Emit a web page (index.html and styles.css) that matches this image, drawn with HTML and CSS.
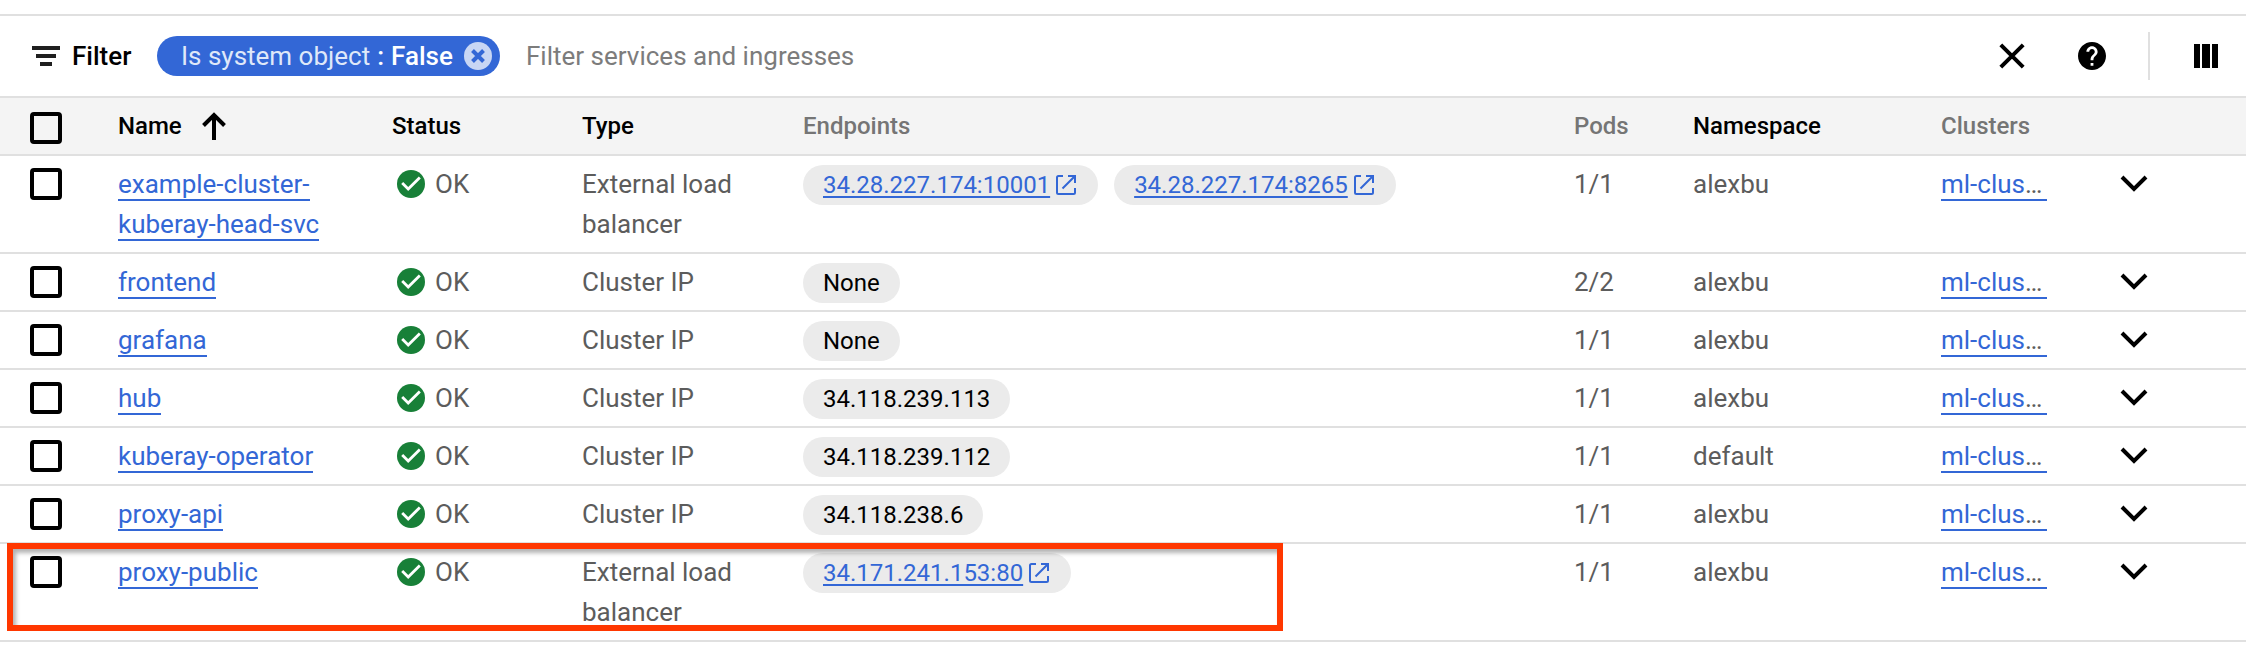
FILE: index.html
```
<!DOCTYPE html>
<html lang="en">
<head>
<meta charset="utf-8">
<title>Services and ingresses</title>
<link rel="stylesheet" href="styles.css">
</head>
<body>
<svg class="defs" width="0" height="0">
  <symbol id="ok" viewBox="2 2 20 20"><circle cx="12" cy="12" r="10" fill="#188038"/><path d="M10 17l-5-5 1.410-1.410L10 14.170l7.590-7.590L19 8z" fill="#fff"/></symbol>
  <symbol id="open" viewBox="0 0 20 20"><path d="M7 1H2.500Q1 1 1 2.500V17.500Q1 19 2.500 19H17.500Q19 19 19 17.500V13M12 1h7v7M19 1L6.500 13.500" fill="none" stroke="#3367d6" stroke-width="2"/></symbol>
  <symbol id="chev" viewBox="0 0 28 18"><path d="M2 2l12 12 12-12" fill="none" stroke="#000" stroke-width="4"/></symbol>
</svg>
<div class="toolbar">
  <svg class="filter-icon" viewBox="0 0 28 20"><path d="M0 0h28v4H0zM4 8h20v4H4zM8 16h12v4H8z" fill="#1f1f1f"/></svg>
  <span class="filter-label">Filter</span>
  <div class="filter-chip"><span class="key">Is system object</span><span class="colon">:</span><b>False</b>
    <svg class="chip-x" viewBox="0 0 28 28"><circle cx="14" cy="14" r="14" fill="#c8d6f4"/><path d="M8.500 8.500l11 11M19.500 8.500l-11 11" stroke="#3367d6" stroke-width="4"/></svg>
  </div>
  <span class="placeholder">Filter services and ingresses</span>
  <svg class="clear" viewBox="0 0 26 26"><path d="M1.800 1.800l22.400 22.400M24.200 1.800l-22.400 22.400" stroke="#000" stroke-width="4"/></svg>
  <svg class="help" viewBox="2 2 20 20"><path d="M12 2C6.480 2 2 6.480 2 12s4.480 10 10 10 10-4.480 10-10S17.520 2 12 2zm1 17h-2v-2h2v2zm2.070-7.750l-.9.920C13.450 12.900 13 13.500 13 15h-2v-.5c0-1.100.45-2.100 1.170-2.830l1.240-1.260c.37-.36.59-.86.59-1.410 0-1.100-.9-2-2-2s-2 .9-2 2H8c0-2.210 1.790-4 4-4s4 1.790 4 4c0 .88-.36 1.680-.93 2.250z"/></svg>
  <i class="divider"></i>
  <svg class="columns" viewBox="0 0 24 24"><path d="M0 0h6v24H0zM8 0h8v24H8zM18 0h6v24h-6z"/></svg>
</div>
<div class="row head">
  <i class="box"></i>
  <div>Name<svg class="sort" viewBox="0 0 24 28"><path d="M12 28V3M1.500 13.500L12 3l10.500 10.500" fill="none" stroke="#000" stroke-width="4"/></svg></div>
  <div>Status</div><div>Type</div><div class="muted">Endpoints</div><div class="muted">Pods</div><div>Namespace</div><div class="muted">Clusters</div><div></div>
</div>
<div class="row tall">
  <i class="box"></i><div><a class="link">example-cluster-<br>kuberay-head-svc</a></div>
  <div class="status"><svg><use href="#ok"/></svg>OK</div><div>External load<br>balancer</div>
  <div class="chips"><span class="chip linked"><a>34.28.227.174:10001</a><svg><use href="#open"/></svg></span><span class="chip linked"><a>34.28.227.174:8265</a><svg><use href="#open"/></svg></span></div>
  <div>1/1</div><div>alexbu</div><div class="cluster"><a>ml-clus</a>…</div><svg class="chev"><use href="#chev"/></svg>
</div>
<div class="row">
  <i class="box"></i><div><a class="link">frontend</a></div>
  <div class="status"><svg><use href="#ok"/></svg>OK</div><div>Cluster IP</div>
  <div class="chips"><span class="chip">None</span></div>
  <div>2/2</div><div>alexbu</div><div class="cluster"><a>ml-clus</a>…</div><svg class="chev"><use href="#chev"/></svg>
</div>
<div class="row">
  <i class="box"></i><div><a class="link">grafana</a></div>
  <div class="status"><svg><use href="#ok"/></svg>OK</div><div>Cluster IP</div>
  <div class="chips"><span class="chip">None</span></div>
  <div>1/1</div><div>alexbu</div><div class="cluster"><a>ml-clus</a>…</div><svg class="chev"><use href="#chev"/></svg>
</div>
<div class="row">
  <i class="box"></i><div><a class="link">hub</a></div>
  <div class="status"><svg><use href="#ok"/></svg>OK</div><div>Cluster IP</div>
  <div class="chips"><span class="chip">34.118.239.113</span></div>
  <div>1/1</div><div>alexbu</div><div class="cluster"><a>ml-clus</a>…</div><svg class="chev"><use href="#chev"/></svg>
</div>
<div class="row">
  <i class="box"></i><div><a class="link">kuberay-operator</a></div>
  <div class="status"><svg><use href="#ok"/></svg>OK</div><div>Cluster IP</div>
  <div class="chips"><span class="chip">34.118.239.112</span></div>
  <div>1/1</div><div>default</div><div class="cluster"><a>ml-clus</a>…</div><svg class="chev"><use href="#chev"/></svg>
</div>
<div class="row">
  <i class="box"></i><div><a class="link">proxy-api</a></div>
  <div class="status"><svg><use href="#ok"/></svg>OK</div><div>Cluster IP</div>
  <div class="chips"><span class="chip">34.118.238.6</span></div>
  <div>1/1</div><div>alexbu</div><div class="cluster"><a>ml-clus</a>…</div><svg class="chev"><use href="#chev"/></svg>
</div>
<div class="row tall">
  <i class="box"></i><div><a class="link">proxy-public</a></div>
  <div class="status"><svg><use href="#ok"/></svg>OK</div><div>External load<br>balancer</div>
  <div class="chips"><span class="chip linked"><a>34.171.241.153:80</a><svg><use href="#open"/></svg></span></div>
  <div>1/1</div><div>alexbu</div><div class="cluster"><a>ml-clus</a>…</div><svg class="chev"><use href="#chev"/></svg>
  <div class="highlight"></div>
</div>
</body>
</html>
```
FILE: styles.css
```
* { box-sizing: border-box; }
body { margin: 0; padding-top: 14px; background: #fff; color: #5c5c5c; font: 26px/40px Roboto, sans-serif; height: 666px; overflow: hidden; }
svg { display: block; flex: none; }
.defs { position: absolute; }
.toolbar { height: 84px; border-top: 2px solid #e0e0e0; border-bottom: 2px solid #e0e0e0; display: flex; align-items: center; padding: 0 28px 0 32px; }
.filter-icon { width: 28px; height: 20px; }
.filter-label { margin-left: 12px; width: 85px; font-weight: 500; color: #000; }
.filter-chip { width: 343px; height: 40px; border-radius: 20px; background: #3367d6; color: #fff; display: flex; align-items: center; padding: 0 8px 0 24px; white-space: nowrap; }
.key { color: #dfe8f9; }
.colon { margin: 0 7px; font-weight: 500; }
.filter-chip b { font-weight: 500; }
.chip-x { width: 28px; height: 28px; margin-left: auto; }
.placeholder { margin-left: 26px; color: #7c7c7c; }
.clear { width: 26px; height: 26px; margin-left: auto; }
.help { width: 28px; height: 28px; margin-left: 53px; }
.divider { width: 2px; height: 48px; background: #e0e0e0; margin-left: 42px; }
.columns { width: 24px; height: 24px; margin-left: 44px; }
.row { position: relative; display: grid; grid-template-columns: 88px 274px 190px 221px 771px 119px 248px 178px 1fr; padding: 8px 0 0 30px; height: 58px; border-bottom: 2px solid #e0e0e0; white-space: nowrap; align-items: start; }
.tall { height: 98px; }
.head { background: #f4f4f4; font-size: 24px; font-weight: 500; color: #000; }
.head > div { display: flex; align-items: center; }
.head > .muted { color: #757575; }
.box { width: 32px; height: 32px; border: 4px solid #000; border-radius: 4px; margin-top: 4px; }
.head .box { margin-top: 6px; }
.sort { width: 24px; height: 28px; margin-left: 20px; }
.link { color: #3367d6; border-bottom: 2px solid #3367d6; }
.status { display: flex; align-items: center; gap: 10px; padding-left: 5px; }
.status svg { width: 28px; height: 28px; }
.chips { display: flex; gap: 16px; padding-top: 1px; }
.chip { height: 40px; border-radius: 20px; background: #ebebeb; color: #000; padding: 0 20px; font-size: 24px; display: flex; align-items: center; }
.linked { padding-right: 22px; }
.chip a { color: #3367d6; text-decoration: underline; text-decoration-thickness: 2px; text-underline-offset: 3px; }
.chip svg { width: 20px; height: 20px; margin-left: 6px; }
.cluster { width: 106px; line-height: 34px; padding: 3px 0 0; height: 37px; border-bottom: 2px solid #3367d6; }
.cluster a { color: #3367d6; }
.chev { width: 28px; height: 18px; margin: 11px 0 0 1px; }
.highlight { position: absolute; left: 7px; top: -1px; width: 1276px; height: 88px; border: 6px solid #ff3700; box-shadow: inset 3px 4px 4px rgba(0,0,0,.3); }
```
